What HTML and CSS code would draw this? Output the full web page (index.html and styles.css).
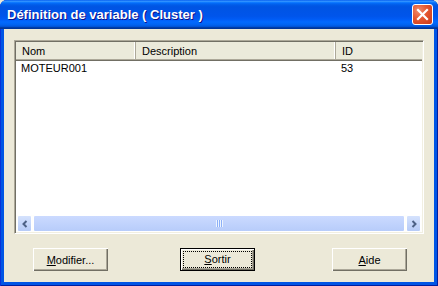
FILE: index.html
```html
<!DOCTYPE html>
<html lang="fr">
<head>
    <meta charset="UTF-8">
    <title>Définition de variable ( Cluster )</title>
    <link rel="stylesheet" href="styles.css">
</head>
<body>
    <div class="window">
        <div class="titlebar">
            <span class="title">Définition de variable ( Cluster )</span>
            <button class="close" aria-label="Fermer">
                <svg width="13" height="13" viewBox="0 0 13 13">
                    <path d="M2 2 L11 11 M11 2 L2 11" stroke="#fff" stroke-width="2.2" stroke-linecap="square"/>
                </svg>
            </button>
        </div>

        <div class="client">
            <div class="listview">
                <div class="header">
                    <div class="col col-nom">Nom</div>
                    <div class="col col-desc">Description</div>
                    <div class="col col-id">ID</div>
                </div>
                <div class="rows">
                    <div class="row">
                        <div class="cell col-nom">MOTEUR001</div>
                        <div class="cell col-desc"></div>
                        <div class="cell col-id">53</div>
                    </div>
                </div>
                <div class="hscroll">
                    <div class="arrow">
                        <svg width="8" height="8" viewBox="0 0 8 8"><path d="M5.5 1 L2.5 4 L5.5 7" fill="none" stroke="#4d6185" stroke-width="2"/></svg>
                    </div>
                    <div class="thumb"><span class="grip"></span></div>
                    <div class="arrow">
                        <svg width="8" height="8" viewBox="0 0 8 8"><path d="M2.5 1 L5.5 4 L2.5 7" fill="none" stroke="#4d6185" stroke-width="2"/></svg>
                    </div>
                </div>
            </div>

            <div class="buttons">
                <button class="btn"><u>M</u>odifier...</button>
                <button class="btn default"><span class="focus"><u>S</u>ortir</span></button>
                <button class="btn right"><u>A</u>ide</button>
            </div>
        </div>
    </div>
</body>
</html>
```

FILE: styles.css
```css
body {
    margin: 0;
    background: #ece9d8;
    font-family: "Liberation Sans", Arial, sans-serif;
    font-size: 11px;
    color: #000;
}
.window {
    width: 438px;
    height: 286px;
    box-sizing: border-box;
    display: flex;
    flex-direction: column;
    background: #0055e5;
    border-radius: 7px 7px 0 0;
    box-shadow: inset 1px 0 #0831d9, inset -1px 0 #001ea0, inset 0 -1px #001ea0;
}
.titlebar {
    height: 29px;
    display: flex;
    align-items: center;
    padding: 0 5px 0 7px;
    border-radius: 7px 7px 0 0;
    background: linear-gradient(#0058ee 0%, #3593ff 4%, #288eff 6%, #127dff 8%, #036ffc 10%, #0262ee 14%, #0057e5 20%, #0054e3 24%, #0055eb 56%, #005bf5 66%, #026afe 76%, #0062ef 86%, #0052d6 92%, #0040ab 94%, #003092 100%);
}
.title {
    flex: 1;
    color: #fff;
    font-weight: bold;
    font-size: 13px;
    text-shadow: 1px 1px #0f1089;
}
.close {
    width: 21px;
    height: 21px;
    padding: 0;
    display: flex;
    align-items: center;
    justify-content: center;
    border: 1px solid #fff;
    border-radius: 3px;
    background: radial-gradient(circle at 30% 30%, #f08c6e 0%, #e4562f 45%, #c8381a 100%);
}
.client {
    flex: 1;
    margin: 0 4px 4px 4px;
    background: #ece9d8;
    display: flex;
    flex-direction: column;
    padding: 11px 10px 11px 10px;
}
.listview {
    height: 194px;
    box-sizing: border-box;
    display: flex;
    flex-direction: column;
    background: #fff;
    border-top: 1px solid #aca899;
    border-left: 1px solid #aca899;
    border-right: 1px solid #fff;
    border-bottom: 1px solid #fff;
    box-shadow: inset 1px 1px #716f64, inset -1px -1px #f1efe2;
    padding: 1px;
}
.header {
    display: flex;
    height: 17px;
    background: #ebeadb;
    border-bottom: 1px solid #aca899;
    box-shadow: 0 1px #716f64;
    margin-bottom: 1px;
}
.col {
    box-sizing: border-box;
    padding: 3px 6px 0 6px;
    border-right: 1px solid #aca899;
    box-shadow: inset -1px 0 #fff;
}
.col.col-id {
    border-right: none;
    box-shadow: none;
}
.col-nom { width: 120px; }
.col-desc { width: 200px; }
.col-id { flex: 1; }
.rows {
    flex: 1;
}
.row {
    display: flex;
    height: 14px;
}
.cell {
    box-sizing: border-box;
    padding: 1px 5px 0 5px;
}
.hscroll {
    height: 17px;
    display: flex;
    gap: 1px;
    padding: 0 1px;
    background: #fefefb;
}
.arrow {
    width: 15px;
    box-sizing: border-box;
    border: 1px solid #fff;
    border-radius: 2px;
    background: linear-gradient(#d5e2fd, #b6cbf7);
    display: flex;
    align-items: center;
    justify-content: center;
}
.thumb {
    flex: 1;
    box-sizing: border-box;
    border: 1px solid #fff;
    border-radius: 2px;
    background: linear-gradient(#cbdaff, #b7ccfa);
    display: flex;
    align-items: center;
    justify-content: center;
}
.grip {
    width: 7px;
    height: 7px;
    background: repeating-linear-gradient(90deg, #eef4fe 0 1px, #8cb0f8 1px 2px);
}
.buttons {
    display: flex;
    margin-top: 14px;
    padding: 0 17px 0 19px;
    gap: 72px;
}
.btn {
    width: 75px;
    height: 23px;
    box-sizing: border-box;
    font-family: "Liberation Sans", Arial, sans-serif;
    font-size: 11px;
    color: #000;
    background: #ece9d8;
    border: none;
    padding: 0;
    box-shadow: inset 1px 1px #fff, inset -1px -1px #716f64, inset -2px -2px #aca899;
}
.btn.right {
    margin-left: auto;
}
.btn.default {
    border: 1px solid #000;
    padding: 2px;
    box-shadow: inset 1px 1px #fff, inset -1px -1px #716f64, inset -2px -2px #aca899;
}
.focus {
    display: block;
    height: 100%;
    box-sizing: border-box;
    border: 1px dotted #000;
    line-height: 14px;
}
```
